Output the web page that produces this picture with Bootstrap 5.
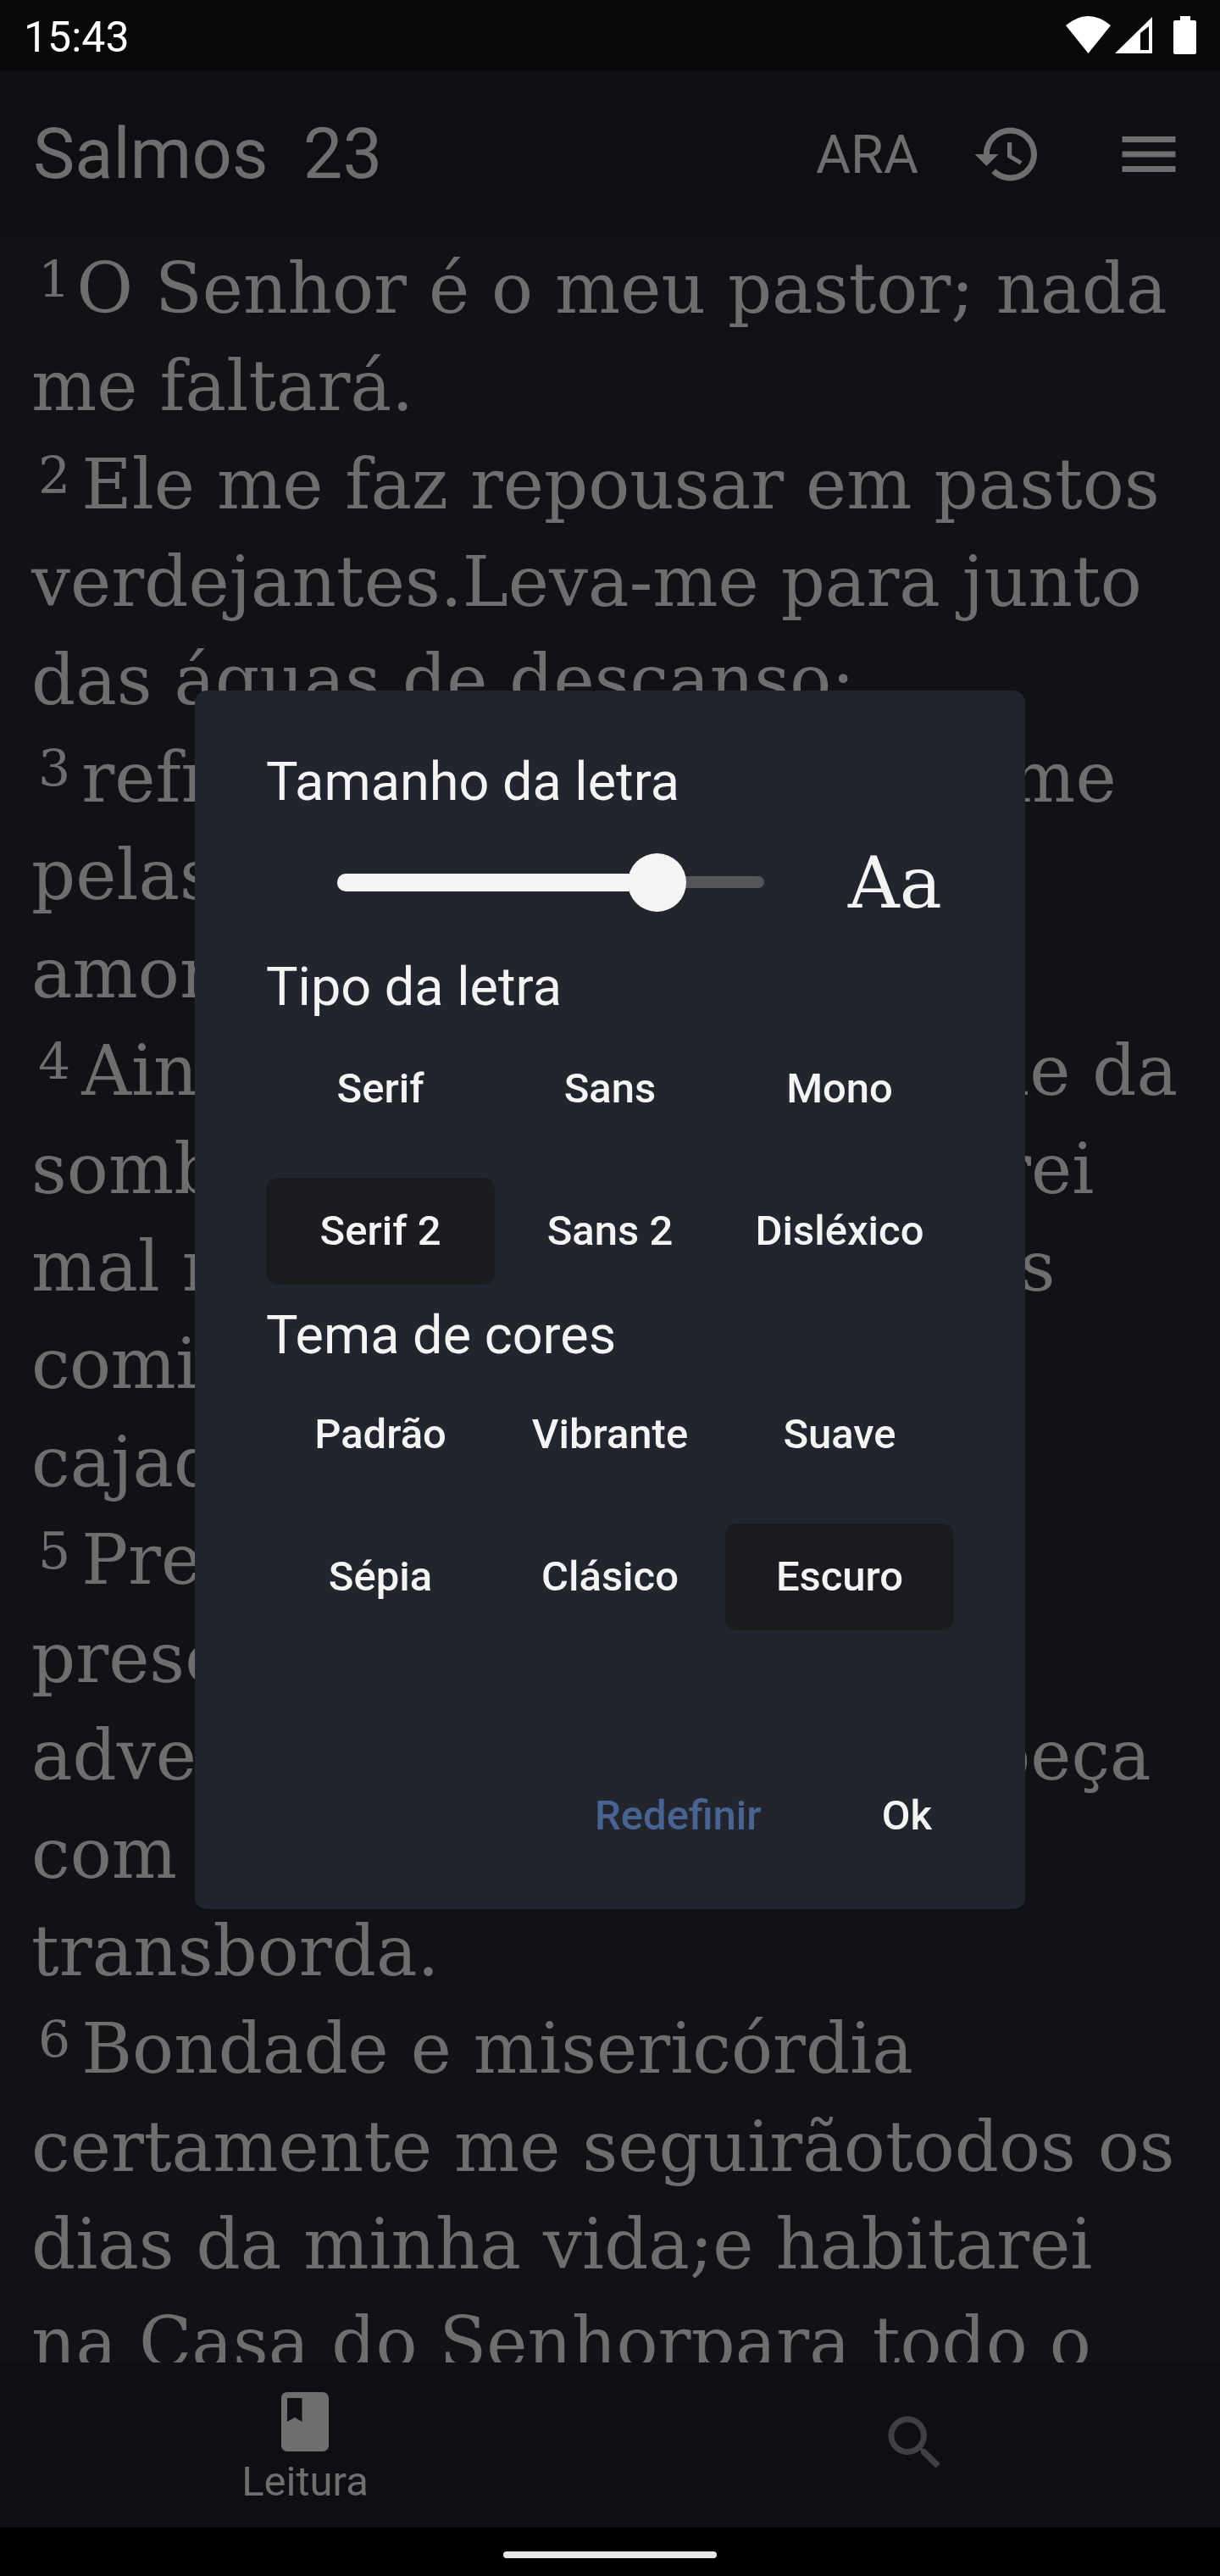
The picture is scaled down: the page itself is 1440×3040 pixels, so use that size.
<!DOCTYPE html>
<html lang="pt">
<head>
<meta charset="utf-8">
<link href="https://cdn.jsdelivr.net/npm/bootstrap@5.3.0/dist/css/bootstrap.min.css" rel="stylesheet">
<style>
html,body{margin:0;background:#000}
.app-shell{width:1440px;height:3040px;overflow:hidden;position:relative;background:#101216;font-family:Roboto,sans-serif;color:#6e6e6e}
.status-strip{height:83px;background:#08090b;color:#fff;font-size:50px;padding:0 27px 0 28px}
.status-strip span{line-height:83px;padding-top:5px}
.top-strip{height:197px;background:#0d0f13;padding:0 42px 0 39px}
.book-title{font-size:83px;line-height:1;white-space:pre}
.trans{font-size:63px;line-height:1;margin-right:63px;padding-top:2px}
.hist-icon{margin-right:83px}
.verses{flex:1 1 0;overflow:hidden;font-family:"DejaVu Serif",serif;font-size:81.5px;line-height:115.4px;padding:3px 0 0 37px;white-space:nowrap}
.verses sup{font-size:60px;top:-18px;line-height:0;margin:0 13px 0 8px;vertical-align:baseline;position:relative}
.verses sup:first-child{margin-right:7px}
.snug-line{letter-spacing:-.6px}
.bottom-strip{height:195px;background:#0d0f13}
.bottom-strip>div{width:720px}
.tab-main{padding-top:28px}
.tab-side{padding-bottom:6px}
.tab-label{font-size:49px;line-height:1;margin-top:4px}
.gesture-strip{height:57px;background:#000}
.gesture-pill{width:252px;height:8px;border-radius:4px;background:#e8e8e8;margin-top:28px}
.dialog-box{position:absolute;left:230px;top:815px;width:980px;height:1438px;background:#22252d;border-radius:14px;color:#f4f4f4;padding:0 84px}
.dlg-title{font-size:63px;line-height:72px;margin:0;font-weight:400}
.t-a{padding-top:72px}
.slider-line{height:170px;position:relative}
.track-off{position:absolute;left:84px;top:75px;width:504px;height:14px;background:#53555b;border-radius:7px}
.track-on{position:absolute;left:84px;top:72px;width:378px;height:21px;background:#f4f4f4;border-radius:10px}
.slider-knob{position:absolute;left:427px;top:48px;width:69px;height:69px;border-radius:50%;background:#f4f4f4}
.aa-mark{position:absolute;left:687px;top:30px;font-family:"DejaVu Serif",serif;font-size:84px;line-height:106px}
.choice-grid{display:grid;grid-template-columns:repeat(3,270px);column-gap:1px;row-gap:42px;padding:21px 0 24px}
.choice-grid.theme-grid{padding-top:18px}
.choice-grid .btn{height:126px;border:0;padding:0;border-radius:14px;font-size:49px;font-weight:500;color:#f4f4f4;background:transparent}
.choice-grid .btn.picked{background:#1b1c20}
.dlg-actions{position:absolute;left:0;right:0;bottom:80px;padding-right:110px;gap:142px}
.dlg-actions .btn{border:0;padding:0;font-size:49px;font-weight:500;line-height:1.2;color:#f4f4f4}
.dlg-actions .btn.reset{color:#4a6491}
</style>
</head>
<body>
<div class="app-shell d-flex flex-column">
  <div class="status-strip d-flex justify-content-between align-items-center">
    <span>15:43</span>
    <svg width="155" height="46" viewBox="0 0 155 46" fill="#fff"><path d="M0 11Q26.5-11 53 11L26.5 44z"/><path fill-rule="evenodd" d="M58 44L102 1v43zM88 20L98 12V40H88z"/><path d="M135 0h12v5h5a2 2 0 0 1 2 2v36a2 2 0 0 1-2 2h-23a2 2 0 0 1-2-2V7a2 2 0 0 1 2-2h6z"/></svg>
  </div>
  <div class="top-strip d-flex align-items-center">
    <div class="book-title flex-grow-1">Salmos  23</div>
    <div class="trans">ARA</div>
    <svg width="84" height="84" viewBox="0 0 24 24" fill="#6e6e6e" class="hist-icon"><path d="M13 3c-4.97 0-9 4.03-9 9H1l3.89 3.89.07.14L9 12H6c0-3.87 3.13-7 7-7s7 3.13 7 7-3.13 7-7 7c-1.93 0-3.68-.79-4.94-2.06l-1.42 1.42C8.27 19.99 10.51 21 13 21c4.97 0 9-4.03 9-9s-4.03-9-9-9zm-1 5v5l4.28 2.54.72-1.21-3.5-2.08V8H12z"/></svg>
    <svg width="84" height="84" viewBox="0 0 24 24" fill="#6e6e6e"><path d="M3 18h18v-2H3v2zm0-5h18v-2H3v2zm0-7v2h18V6H3z"/></svg>
  </div>
  <div class="verses"><sup>1</sup>O Senhor é o meu pastor; nada<br>me faltará.<br>
    <sup>2</sup>Ele me faz repousar em pastos<br>verdejantes.Leva-me para junto<br>das águas de descanso;<br>
    <sup>3</sup>refrigera-me a alma. Guia-me<br>pelas veredas da justiça por<br>amor do seu nome.<br>
    <sup>4</sup>Ainda que eu ande pelo vale da<br>sombra da morte, não temerei<br>mal nenhum, porque tu estás<br><span class="snug-line">comigo; o teu bordão e o teu</span><br>cajado me consolam.<br>
    <sup>5</sup>Preparas-me uma mesa na<br>presença dos meus<br>adversários, unges-me a cabeça<br>com óleo; o meu cálice<br>transborda.<br>
    <sup>6</sup>Bondade e misericórdia<br>certamente me seguirãotodos os<br>dias da minha vida;e habitarei<br>na Casa do Senhorpara todo o<br>sempre.
  </div>
  <div class="bottom-strip d-flex">
    <div class="tab-main d-flex flex-column align-items-center">
      <svg width="84" height="84" viewBox="0 0 24 24" fill="#6e6e6e"><path d="M18 2H6c-1.1 0-2 .9-2 2v16c0 1.1.9 2 2 2h12c1.1 0 2-.9 2-2V4c0-1.1-.9-2-2-2zM6 4h5v8l-2.5-1.5L6 12V4z"/></svg>
      <div class="tab-label">Leitura</div>
    </div>
    <div class="tab-side d-flex align-items-center justify-content-center">
      <svg width="84" height="84" viewBox="0 0 24 24" fill="#3f4042"><path d="M15.5 14h-.79l-.28-.27C15.41 12.59 16 11.11 16 9.5 16 5.91 13.09 3 9.5 3S3 5.91 3 9.5 5.91 16 9.5 16c1.61 0 3.09-.59 4.23-1.57l.27.28v.79l5 4.99L20.49 19l-4.99-5zm-6 0C7.01 14 5 11.99 5 9.5S7.01 5 9.5 5 14 7.01 14 9.5 11.99 14 9.5 14z"/></svg>
    </div>
  </div>
  <div class="gesture-strip d-flex justify-content-center"><div class="gesture-pill"></div></div>

  <div class="dialog-box">
    <h2 class="dlg-title t-a">Tamanho da letra</h2>
    <div class="slider-line">
      <div class="track-off"></div><div class="track-on"></div><div class="slider-knob"></div>
      <div class="aa-mark">Aa</div>
    </div>
    <h2 class="dlg-title">Tipo da letra</h2>
    <div class="choice-grid">
      <button class="btn">Serif</button><button class="btn">Sans</button><button class="btn">Mono</button>
      <button class="btn picked">Serif 2</button><button class="btn">Sans 2</button><button class="btn">Disléxico</button>
    </div>
    <h2 class="dlg-title">Tema de cores</h2>
    <div class="choice-grid theme-grid">
      <button class="btn">Padrão</button><button class="btn">Vibrante</button><button class="btn">Suave</button>
      <button class="btn">Sépia</button><button class="btn">Clásico</button><button class="btn picked">Escuro</button>
    </div>
    <div class="dlg-actions d-flex justify-content-end">
      <button class="btn reset">Redefinir</button><button class="btn">Ok</button>
    </div>
  </div>
</div>
<script src="https://cdn.jsdelivr.net/npm/bootstrap@5.3.0/dist/js/bootstrap.bundle.min.js"></script>
</body>
</html>
